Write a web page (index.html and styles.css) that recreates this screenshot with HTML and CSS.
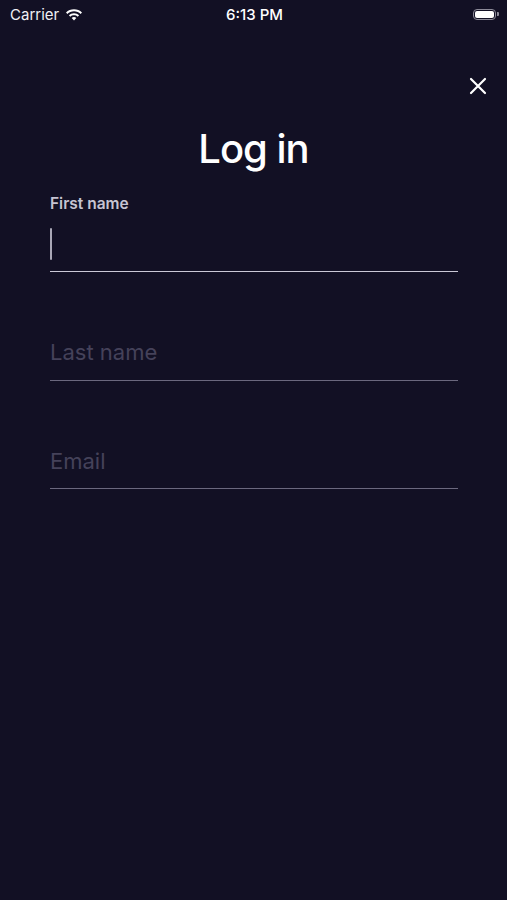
FILE: index.html
```html
<!DOCTYPE html>
<html>
<head>
  <title>Log in</title>
  <meta name="viewport" content="width=device-width, initial-scale=1.0">
  <link rel="stylesheet" href="styles.css">
</head>
<body>
  <div class="screen">
    <div class="status-bar">
      <div class="status-left">
        <span class="carrier">Carrier</span>
        <svg class="wifi" width="18" height="13" viewBox="0 0 18 13">
          <path d="M9 1.2c3.1 0 5.9 1.2 8 3.2l-1.4 1.5C13.9 4.3 11.6 3.3 9 3.3S4.1 4.3 2.4 5.9L1 4.4C3.1 2.4 5.9 1.2 9 1.2z" fill="#fff"/>
          <path d="M9 5.2c2 0 3.8.8 5.1 2l-1.4 1.5C11.7 7.8 10.4 7.3 9 7.3s-2.7.5-3.7 1.4L3.9 7.2c1.3-1.2 3.1-2 5.1-2z" fill="#fff"/>
          <path d="M9 9.1c.9 0 1.7.3 2.3.9L9 12.4 6.7 10c.6-.6 1.4-.9 2.3-.9z" fill="#fff"/>
        </svg>
      </div>
      <span class="time">6:13 PM</span>
      <div class="status-right">
        <div class="battery"><div class="battery-level"></div></div>
        <div class="battery-nub"></div>
      </div>
    </div>

    <div class="topbar">
      <button class="close" aria-label="Close">
        <svg width="18" height="18" viewBox="0 0 18 18">
          <path d="M2 2L16 16M16 2L2 16" stroke="#fff" stroke-width="2.2" stroke-linecap="round"/>
        </svg>
      </button>
    </div>

    <h1 class="title">Log in</h1>

    <form class="form">
      <div class="field">
        <label class="label">First name</label>
        <div class="input active"><span class="cursor"></span></div>
      </div>
      <div class="field">
        <label class="label hidden">Last name</label>
        <div class="input"><span class="placeholder">Last name</span></div>
      </div>
      <div class="field">
        <label class="label hidden">Email</label>
        <div class="input"><span class="placeholder">Email</span></div>
      </div>
    </form>
  </div>
</body>
</html>
```

FILE: styles.css
```css
body {
  margin: 0;
  padding: 0;
  background-color: #121024;
  font-family: Inter, "Noto Sans", Arial, sans-serif;
  color: #ffffff;
}

.screen {
  width: 507px;
  height: 900px;
  background-color: #121024;
}

.status-bar {
  height: 28px;
  display: flex;
  align-items: center;
  justify-content: space-between;
  padding: 0 8px 0 10px;
  font-size: 15px;
}

.status-left {
  display: flex;
  align-items: center;
  gap: 6px;
  width: 120px;
}

.carrier {
  font-weight: 400;
  color: #f0f0f4;
}

.time {
  font-weight: 500;
}

.status-right {
  display: flex;
  align-items: center;
  justify-content: flex-end;
  width: 120px;
}

.battery {
  width: 23px;
  height: 11px;
  border: 1px solid #8c8a98;
  border-radius: 4px;
  padding: 1px;
  box-sizing: border-box;
}

.battery-level {
  width: 100%;
  height: 100%;
  background-color: #ffffff;
  border-radius: 2px;
}

.battery-nub {
  width: 2px;
  height: 4px;
  margin-left: 1px;
  background-color: #8c8a98;
  border-radius: 0 1px 1px 0;
}

.topbar {
  margin-top: 36px;
  height: 44px;
  display: flex;
  align-items: center;
  justify-content: flex-end;
  padding-right: 20px;
}

.close {
  background: none;
  border: none;
  padding: 0;
  width: 18px;
  height: 18px;
  cursor: pointer;
}

.title {
  margin: 17px 0 0;
  text-align: center;
  font-size: 40px;
  line-height: 48px;
  font-weight: 500;
  letter-spacing: -1px;
}

.form {
  padding: 0 49px 0 50px;
  margin-top: 22px;
  display: flex;
  flex-direction: column;
  gap: 31.5px;
}

.field {
  display: flex;
  flex-direction: column;
}

.label {
  font-size: 15.5px;
  line-height: 18px;
  font-weight: 600;
  color: #c6c4d2;
}

.label.hidden {
  visibility: hidden;
}

.input {
  height: 59px;
  box-sizing: border-box;
  padding-top: 3px;
  display: flex;
  align-items: center;
  border-bottom: 1.5px solid #6b687e;
}

.input.active {
  border-bottom-color: #cac8d6;
}

.cursor {
  width: 2px;
  height: 32px;
  background-color: #a9a7b6;
  border-radius: 1px;
}

.placeholder {
  font-size: 22px;
  color: #45425a;
}
```
